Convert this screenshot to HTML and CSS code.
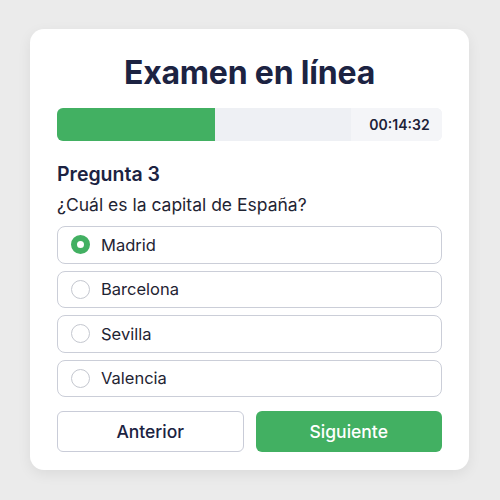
FILE: index.html
```html
<!DOCTYPE html>
<html lang="es">
<head>
<meta charset="utf-8">
<title>Examen en línea</title>
<link rel="stylesheet" href="styles.css">
</head>
<body>
<main class="card">
  <h1 class="title">Examen en línea</h1>
  <div class="progress">
    <div class="progress-fill" style="width: 41%"></div>
    <div class="timer">00:14:32</div>
  </div>
  <h2 class="q-num">Pregunta 3</h2>
  <p class="q-text">¿Cuál es la capital de España?</p>
  <ul class="options">
    <li class="option selected"><span class="radio"></span>Madrid</li>
    <li class="option"><span class="radio"></span>Barcelona</li>
    <li class="option"><span class="radio"></span>Sevilla</li>
    <li class="option"><span class="radio"></span>Valencia</li>
  </ul>
  <div class="actions">
    <button class="btn btn-prev">Anterior</button>
    <button class="btn btn-next">Siguiente</button>
  </div>
</main>
</body>
</html>
```
FILE: styles.css
```css
* { box-sizing: border-box; }

html, body {
  margin: 0;
  height: 100%;
}

body {
  background: #ebebeb;
  font-family: Inter, "Noto Sans", sans-serif;
  color: #1d2238;
  padding: 29px 31px 30px 30px;
}

.card {
  background: #ffffff;
  border-radius: 14px;
  box-shadow: 0 4px 14px rgba(0, 0, 0, 0.07);
  padding: 22px 27px 19px 27px;
  height: 441px;
}

.title {
  margin: 0;
  text-align: center;
  font-size: 32px;
  font-weight: 700;
  color: #1c2342;
  line-height: 44px;
  letter-spacing: -0.2px;
}

.progress {
  margin-top: 13px;
  height: 33px;
  background: #eef0f4;
  border-radius: 6px;
  position: relative;
  overflow: hidden;
  display: flex;
  justify-content: flex-end;
}

.progress-fill {
  position: absolute;
  left: 0;
  top: 0;
  bottom: 0;
  background: #42b062;
}

.timer {
  width: 91px;
  background: #f4f5f8;
  font-size: 14px;
  font-weight: 600;
  color: #1d2238;
  display: flex;
  align-items: center;
  justify-content: center;
  padding-left: 6px;
}

.q-num {
  margin: 20px 0 0 0;
  font-size: 19.5px;
  font-weight: 600;
  line-height: 26px;
  color: #1c2342;
}

.q-text {
  margin: 6px 0 0 0;
  font-size: 17.5px;
  line-height: 24px;
  color: #1f2433;
}

.options {
  list-style: none;
  margin: 9px 0 0 0;
  padding: 0;
  display: flex;
  flex-direction: column;
  gap: 7px;
}

.option {
  height: 37.5px;
  border: 1px solid #cbced8;
  border-radius: 8px;
  display: flex;
  align-items: center;
  padding-left: 13px;
  font-size: 16.5px;
  color: #1f2433;
}

.radio {
  width: 19px;
  height: 19px;
  border-radius: 50%;
  border: 1px solid #c4c7cf;
  margin-right: 11px;
  flex: none;
}

.option.selected .radio {
  border: 6px solid #42b062;
  background: #ffffff;
}

.actions {
  margin-top: 14px;
  display: grid;
  grid-template-columns: 1fr 1fr;
  gap: 12px;
}

.btn {
  height: 41px;
  border-radius: 6px;
  font-family: inherit;
  font-size: 17.5px;
  font-weight: 550;
}

.btn-prev {
  background: #ffffff;
  border: 1px solid #c9ccd8;
  color: #1c2342;
}

.btn-next {
  background: #42b062;
  border: none;
  color: #ffffff;
}
```
